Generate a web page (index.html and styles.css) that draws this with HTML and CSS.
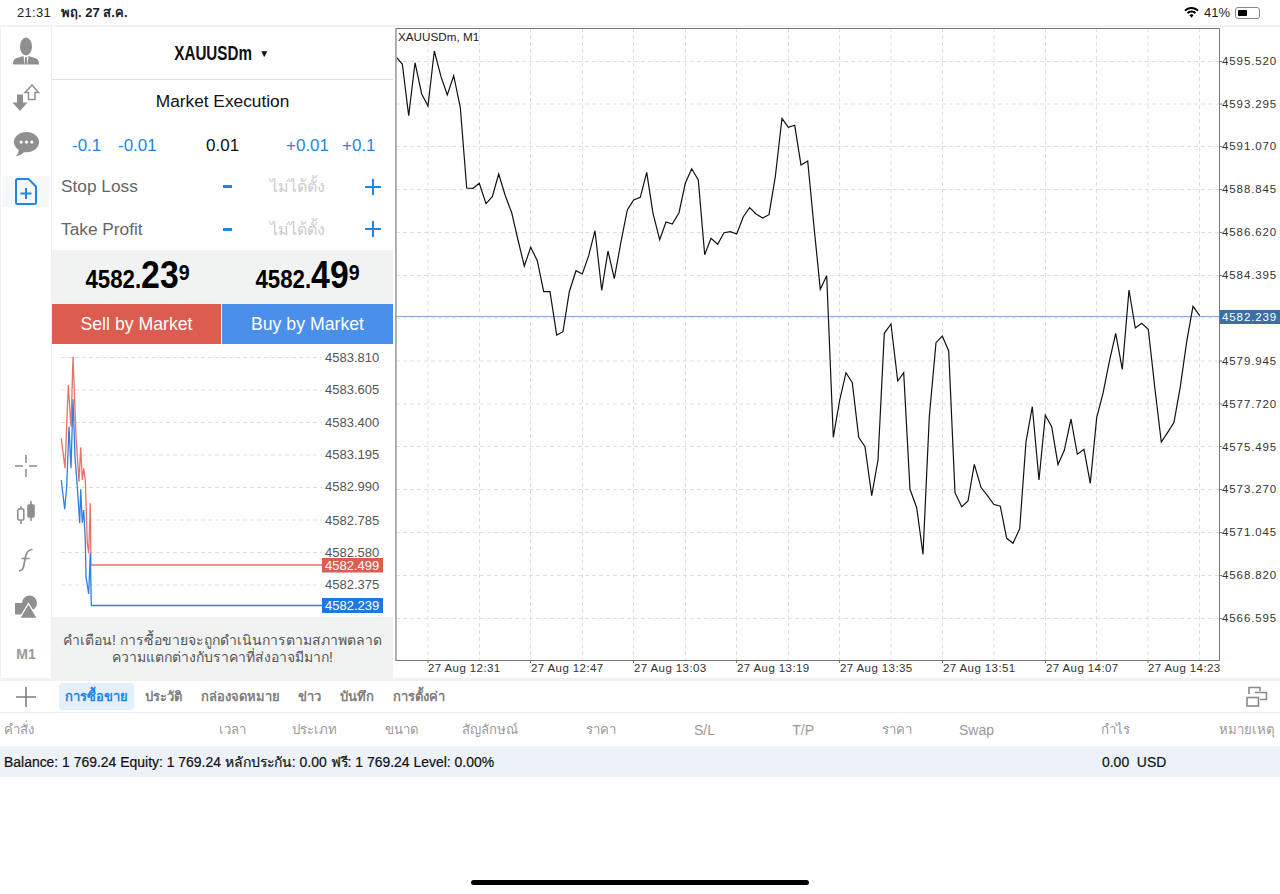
FILE: index.html
```html
<!DOCTYPE html>
<html lang="th">
<head>
    <meta charset="UTF-8">
    <meta name="viewport" content="width=device-width, initial-scale=1.0">
    <title>XAUUSDm - New Order</title>
    <link rel="stylesheet" href="styles.css">
</head>
<body>
    <!-- Status bar -->
    <header class="status">
        <span class="status-time">21:31</span>
        <span class="status-date">พฤ. 27 ส.ค.</span>
        <span class="status-right">
            <svg class="wifi" width="15" height="11" viewBox="0 0 15 11"><path d="M7.5 0C4.7 0 2.2 1.1.3 2.9l1.3 1.4C3.1 2.8 5.2 1.9 7.5 1.9s4.4.9 5.9 2.4l1.3-1.4C12.8 1.1 10.3 0 7.5 0z"/><path d="M7.5 3.6c-1.8 0-3.4.7-4.6 1.9l1.3 1.4c.9-.8 2-1.4 3.3-1.4s2.4.6 3.3 1.4l1.3-1.4C10.9 4.3 9.3 3.6 7.5 3.6z"/><path d="M7.5 7.2c-.9 0-1.6.3-2.2.9l2.2 2.6 2.2-2.6c-.6-.6-1.3-.9-2.2-.9z"/></svg>
            <span>41%</span>
            <span class="battery"><span class="battery-level"></span></span>
        </span>
    </header>

    <main class="workspace">
        <!-- Left tool column -->
        <nav class="sidebar">
            <div class="side-group">
                <div class="side-btn side-btn-person">
                    <svg width="28" height="28" viewBox="0 0 28 28" fill="#8f8f8f"><ellipse cx="14" cy="9.500" rx="6" ry="9"/><path d="M1 27.500c0-5 2-6 5.500-7l5 -1.500 1 8.500zM27 27.500c0-5-2-6-5.500-7l-5-1.500-1 8.500z"/><path d="M13.200 20h1.600l.7 7.500h-3z"/></svg>
                </div>
                <div class="side-btn">
                    <svg width="28" height="28" viewBox="0 0 28 28"><path d="M5 10.500h6v8h4.500L8 27 .5 18.500H5z" fill="#8f8f8f"/><path d="M20 1l6.500 7.500H23v7h-6.500v-7H13z" fill="#fff" stroke="#8f8f8f" stroke-width="1.500"/></svg>
                </div>
                <div class="side-btn">
                    <svg width="27" height="27" viewBox="0 0 28 28"><path d="M14 1C6.600 1 1 5.700 1 11.500c0 3.500 2 6.400 5 8.300-.2 2.200-1.300 4.700-3 6.200 3.200-.2 6.300-1.500 8.500-4 .8.100 1.600.1 2.500.1 7.400 0 13-4.800 13-10.600S21.400 1 14 1z" fill="#8f8f8f"/><circle cx="8.500" cy="11.500" r="1.700" fill="#fff"/><circle cx="14" cy="11.500" r="1.700" fill="#fff"/><circle cx="19.500" cy="11.500" r="1.700" fill="#fff"/></svg>
                </div>
                <div class="side-btn side-btn-active">
                    <svg width="22" height="27" viewBox="0 0 22 27" fill="none" stroke="#1f86e8" stroke-width="2"><path d="M2.500 1h11L21 8.500V24.500a1.500 1.500 0 0 1-1.500 1.500h-17A1.500 1.500 0 0 1 1 24.500V2.500A1.500 1.500 0 0 1 2.500 1z"/><path d="M11 10v11M5.500 15.500h11"/></svg>
                </div>
            </div>
            <div class="side-group">
                <div class="side-btn">
                    <svg width="24" height="24" viewBox="0 0 24 24" stroke="#a8a8a8" stroke-width="2"><path d="M1 12h8M15 12h8M12 1v8M12 15v8"/></svg>
                </div>
                <div class="side-btn">
                    <svg width="22" height="26" viewBox="0 0 22 26" fill="none" stroke="#8f8f8f" stroke-width="1.600"><path d="M6 6v3M6 20v4M16 1v4M16 17v4"/><rect x="2.800" y="9" width="6" height="11" rx="1"/><rect x="13" y="5" width="6" height="12" rx="1" fill="#8f8f8f"/></svg>
                </div>
                <div class="side-btn">
                    <svg width="16" height="24" viewBox="0 0 16 24" fill="none" stroke="#8f8f8f" stroke-width="1.700"><path d="M1 22.500c3.500.5 4.500-2 5.500-8.500s2-12 8-12.500M3.500 10.500h8"/></svg>
                </div>
                <div class="side-btn">
                    <svg width="24" height="24" viewBox="0 0 24 24" fill="#8f8f8f"><circle cx="15.500" cy="8" r="7.500"/><path d="M1 8h11v11.500H1z"/><path d="M14.500 8.500l9 15H5.500z" stroke="#fff" stroke-width="1.300"/></svg>
                </div>
                <div class="side-btn"><span class="side-m1">M1</span></div>
            </div>
        </nav>

        <!-- Order panel -->
        <section class="order">
            <div class="order-symbol"><span class="symbol-name">XAUUSDm</span><span class="symbol-arrow">▼</span></div>
            <div class="order-type">Market Execution</div>
            <div class="volume-row">
                <span class="vol vol-a">-0.1</span>
                <span class="vol vol-b">-0.01</span>
                <span class="vol-value">0.01</span>
                <span class="vol vol-c">+0.01</span>
                <span class="vol vol-d">+0.1</span>
            </div>
            <div class="level-row">
                <span class="level-name">Stop Loss</span>
                <span class="level-minus"></span>
                <span class="level-value">ไม่ได้ตั้ง</span>
                <span class="level-plus"></span>
            </div>
            <div class="level-row level-row-last">
                <span class="level-name">Take Profit</span>
                <span class="level-minus"></span>
                <span class="level-value">ไม่ได้ตั้ง</span>
                <span class="level-plus"></span>
            </div>
            <div class="prices">
                <div class="price"><span class="price-wrap">4582.<b>23</b><sup>9</sup></span></div>
                <div class="price"><span class="price-wrap">4582.<b>49</b><sup>9</sup></span></div>
            </div>
            <div class="trade-btns">
                <button class="btn-sell">Sell by Market</button>
                <button class="btn-buy">Buy by Market</button>
            </div>

            <!-- Tick chart -->
            <svg class="tick-chart" viewBox="52 344 341 273" width="341" height="273">
                <path class="grid" d="M61 357.500H322M61 390H322M61 422.500H322M61 455H322M61 487.500H322M61 520H322M61 552.500H322M61 585H322"/>
                <polyline class="tick-ask" points="61.300,438.300 65,468.300 68.300,385 71,426.700 73,356.700 76,436.700 79,481.700 80.700,447.300 82.300,480 83.700,468.300 85.300,480 87.300,543.300 88.700,553.300 90.300,503.300 91,565 322,565"/>
                <polyline class="tick-bid" points="61.300,480 64.700,509.300 66.700,486.700 69,426.700 71,468.300 73,399.300 75,456.700 77.300,486.700 79.700,523.300 80.700,489.300 82.300,522.700 83.700,510 85.300,540 86,576.700 88.700,594 90.300,553.300 91.300,605.500 322,605.500"/>
                <g class="tick-labels">
                    <text x="325" y="362">4583.810</text>
                    <text x="325" y="394">4583.605</text>
                    <text x="325" y="427">4583.400</text>
                    <text x="325" y="459">4583.195</text>
                    <text x="325" y="491">4582.990</text>
                    <text x="325" y="525">4582.785</text>
                    <text x="325" y="557">4582.580</text>
                    <text x="325" y="589">4582.375</text>
                </g>
                <rect x="322" y="558" width="61" height="14.500" fill="#dc5d50"/>
                <text class="tick-tag" x="325" y="570">4582.499</text>
                <rect x="322" y="598" width="61" height="15" fill="#1f78e0"/>
                <text class="tick-tag" x="325" y="610">4582.239</text>
            </svg>

            <div class="notice">คำเตือน! การซื้อขายจะถูกดำเนินการตามสภาพตลาด<br>ความแตกต่างกับราคาที่ส่งอาจมีมาก!</div>
        </section>

        <!-- Main chart, coordinates follow the page -->
        <svg class="main-chart" viewBox="395 26 885 652" width="885" height="652">
            <path class="grid" d="M396 61.500H1219M396 104H1219M396 146.500H1219M396 189.500H1219M396 232.500H1219M396 275.500H1219M396 318H1219M396 361H1219M396 404H1219M396 446.500H1219M396 489.500H1219M396 532.500H1219M396 575.500H1219M396 618.500H1219"/>
            <path class="grid" d="M428 28V660M479.500 28V660M530.500 28V660M582.500 28V660M633.500 28V660M685.500 28V660M736.500 28V660M788.500 28V660M839.500 28V660M891 28V660M942.500 28V660M994 28V660M1045.500 28V660M1096.500 28V660M1148 28V660M1199.500 28V660"/>
            <path class="price-line" d="M396 316.500H1219"/>
            <polyline class="series" points="396.700,57.700 402.300,64 408.700,115.700 415,62.700 421.700,94 428,106 434.300,51 441,76.700 447.300,95 453.700,75.700 460.300,107.300 466.700,188 473,188.300 479.300,183.300 486,203.700 492.300,196.700 498.700,174 505.300,195.700 511.700,212.700 518,240 524.300,266 530.700,247.300 537.300,260.700 543.700,291.700 550,291.700 556.700,335 563,331.700 569.300,291.700 576,270.700 582.300,274 588.700,255.700 595,230.700 601.700,290.300 608,251 614.300,278.700 620.700,243.300 627.300,210 633.700,200 640.300,197.300 646.700,172.300 653,213.300 659.700,239.700 666,222 672.300,224 679,212.700 685.300,183.300 691.700,168.700 698.300,180 704.700,254.700 711,238.300 717.700,244.300 724,232.700 730.300,231.700 736.700,234 743.300,216.700 749.700,207.700 756,214 762.700,218 769,214.700 775.300,176.700 782,118.300 788.300,127.300 794.700,125.300 801,165 807.700,161 814,226.700 820.300,289.300 826.700,275.700 833.300,437.300 839.700,400 846,372.700 852.300,382.700 858.700,437.300 865,446.700 871.700,495.700 878,460 884.300,333.300 891,324 897.700,381 903.700,372.700 910,489.300 916.700,507.700 923,554.300 929.300,416.700 936,342.700 942.300,336 948.700,351 955,492.700 961.700,506.700 968,501 974.300,464.300 981,487.300 987.300,495.300 993.700,504.300 1000.300,506.300 1006.700,538.300 1013,543.300 1019.700,528.700 1026,441.700 1032.300,406.700 1039,480 1045.300,415.300 1051.700,426.700 1058,464.700 1064.300,450.300 1071,419 1077.300,454.300 1084,449.300 1090.300,483.300 1096.700,417.700 1103,393.300 1109.300,361.700 1115.700,333.300 1122.300,369.300 1129,290 1135.300,328 1141.700,323.300 1148.300,329.300 1154.700,386.700 1161.300,442 1167.700,432.300 1174,422.300 1180.300,386.700 1186.700,341.700 1193,306.300 1199.700,315.700"/>
            <path class="frame" d="M396 660.500V28.500H1219.500V660.500H396"/>
            <path class="frame-left" d="M395.500 28V661"/>
            <path class="frame" d="M1219 61.500h3M1219 104h3M1219 146.500h3M1219 189.500h3M1219 232.500h3M1219 275.500h3M1219 361h3M1219 404h3M1219 446.500h3M1219 489.500h3M1219 532.500h3M1219 575.500h3M1219 618.500h3M428 660v3M530.500 660v3M633.500 660v3M736.500 660v3M839.500 660v3M942.500 660v3M1045.500 660v3M1148 660v3"/>
            <text class="chart-title" x="398" y="41">XAUUSDm, M1</text>
            <g class="axis-labels">
                <text x="1222" y="65">4595.520</text>
                <text x="1222" y="108">4593.295</text>
                <text x="1222" y="150">4591.070</text>
                <text x="1222" y="193">4588.845</text>
                <text x="1222" y="236">4586.620</text>
                <text x="1222" y="279">4584.395</text>
                <text x="1222" y="365">4579.945</text>
                <text x="1222" y="408">4577.720</text>
                <text x="1222" y="451">4575.495</text>
                <text x="1222" y="493">4573.270</text>
                <text x="1222" y="536">4571.045</text>
                <text x="1222" y="579">4568.820</text>
                <text x="1222" y="622">4566.595</text>
            </g>
            <rect x="1220" y="310" width="60" height="14" fill="#3b6ea5"/>
            <text class="axis-tag" x="1222" y="321">4582.239</text>
            <g class="time-labels">
                <text x="428" y="672">27 Aug 12:31</text>
                <text x="531" y="672">27 Aug 12:47</text>
                <text x="634" y="672">27 Aug 13:03</text>
                <text x="737" y="672">27 Aug 13:19</text>
                <text x="840" y="672">27 Aug 13:35</text>
                <text x="943" y="672">27 Aug 13:51</text>
                <text x="1046" y="672">27 Aug 14:07</text>
                <text x="1148" y="672">27 Aug 14:23</text>
            </g>
        </svg>
    </main>

    <!-- Bottom terminal -->
    <section class="terminal">
        <div class="tabs">
            <svg class="tabs-add" width="20" height="20" viewBox="0 0 20 20" stroke="#808080" stroke-width="1.600"><path d="M0 10h20M10 0v20"/></svg>
            <span class="tab tab-active">การซื้อขาย</span>
            <span class="tab">ประวัติ</span>
            <span class="tab">กล่องจดหมาย</span>
            <span class="tab">ข่าว</span>
            <span class="tab">บันทึก</span>
            <span class="tab">การตั้งค่า</span>
            <svg class="tabs-windows" width="22" height="21" viewBox="0 0 22 21" fill="none" stroke="#8a8a8a" stroke-width="1.600"><path d="M3 8V1.500h11V5"/><path d="M9 6.500h11.500v7H14"/><rect x="1" y="11.500" width="11.500" height="8.500"/></svg>
        </div>
        <div class="table-head">
            <span class="col-first">คำสั่ง</span>
            <span>เวลา</span>
            <span>ประเภท</span>
            <span>ขนาด</span>
            <span>สัญลักษณ์</span>
            <span>ราคา</span>
            <span class="col-latin">S/L</span>
            <span class="col-latin">T/P</span>
            <span>ราคา</span>
            <span class="col-latin">Swap</span>
            <span>กำไร</span>
            <span>หมายเหตุ</span>
        </div>
        <div class="balance">
            <span>Balance: 1 769.24 Equity: 1 769.24 หลักประกัน: 0.00 ฟรี: 1 769.24 Level: 0.00%</span>
            <span class="balance-total">0.00&nbsp; USD</span>
        </div>
    </section>

    <div class="home-bar"></div>
</body>
</html>
```
FILE: styles.css
```css
:root {
    --blue: #1f86e8;
    --grey-bg: #f1f3f3;
    --line: #e6e6e6;
    --muted: #9a9a9a;
}

* {
    box-sizing: border-box;
}

html, body {
    margin: 0;
    height: 100%;
}

body {
    position: relative;
    overflow: hidden;
    background: #fff;
    color: #111;
    font-family: "Liberation Sans", "Noto Sans", sans-serif;
}

/* Status bar */
.status {
    display: flex;
    align-items: center;
    height: 25px;
    padding: 0 20px 0 17px;
    font-size: 13px;
    color: #222;
}

.status-time {
    margin-right: 10px;
    letter-spacing: 0.3px;
}

.status-date {
    font-size: 13px;
    font-weight: bold;
}

.status-right {
    display: flex;
    align-items: center;
    gap: 5px;
    margin-left: auto;
    font-size: 13px;
}

.battery {
    position: relative;
    display: block;
    width: 25px;
    height: 12px;
    padding: 2px;
    border: 1px solid #888;
    border-radius: 3px;
}

.battery-level {
    display: block;
    width: 9px;
    height: 100%;
    background: #000;
    border-radius: 1px;
}

/* Workspace */
.workspace {
    display: flex;
    height: 653px;
    border-top: 2px solid #f3f3f3;
}

.sidebar {
    display: flex;
    flex-direction: column;
    justify-content: space-between;
    width: 52px;
    padding: 2px 0 9px;
    border-left: 1px solid #f1f1f1;
    border-right: 1px solid #eee;
}

.side-group {
    display: flex;
    flex-direction: column;
    gap: 16px;
}

.side-btn {
    display: flex;
    align-items: center;
    justify-content: center;
    width: 46px;
    height: 31px;
    margin-left: 2px;
}

.side-btn-person {
    margin-top: 6px;
    margin-bottom: 0;
}

.side-btn-active {
    background: #f6f8f8;
}

.side-m1 {
    font-size: 14px;
    font-weight: bold;
    color: #9a9a9a;
}

/* Order panel */
.order {
    display: flex;
    flex-direction: column;
    width: 341px;
    margin-right: 2px;
}

.order-symbol {
    display: flex;
    align-items: center;
    justify-content: center;
    gap: 1px;
    height: 53px;
    padding-right: 14px;
    border-bottom: 1px solid #ddd;
}

.symbol-name {
    display: inline-block;
    font-size: 20px;
    font-weight: bold;
    transform: scaleX(0.76);
}

.symbol-arrow {
    margin-left: -6px;
    font-size: 10px;
}

.order-type {
    display: flex;
    align-items: center;
    justify-content: center;
    height: 42px;
    font-size: 17.300px;
}

.volume-row {
    position: relative;
    height: 43px;
    font-size: 17px;
}

.vol, .vol-value {
    position: absolute;
    top: 14px;
}

.vol {
    color: var(--blue);
}

.vol-a { left: 20px; }
.vol-b { left: 66px; }
.vol-value { left: 154px; }
.vol-c { left: 234px; }
.vol-d { left: 290px; }

.level-row {
    display: flex;
    align-items: center;
    height: 43px;
    padding: 0 12px 0 9px;
    font-size: 17.300px;
}

.level-row-last {
    height: 42px;
}

.level-name {
    width: 163px;
    color: #666;
}

.level-minus {
    width: 9px;
    height: 3px;
    background: var(--blue);
}

.level-value {
    width: 55px;
    margin: 0 40px 0 38px;
    color: #ccc;
    font-size: 16px;
    white-space: nowrap;
}

.level-plus {
    width: 16px;
    height: 16px;
    background: linear-gradient(var(--blue), var(--blue)) center / 16px 2px no-repeat,
                linear-gradient(var(--blue), var(--blue)) center / 2px 16px no-repeat;
}

.prices {
    display: flex;
    height: 54px;
    background: var(--grey-bg);
}

.price {
    display: flex;
    align-items: center;
    justify-content: center;
    width: 50%;
    color: #000;
}

.price-wrap {
    display: inline-block;
    font-size: 25px;
    font-weight: bold;
    line-height: 40px;
    white-space: nowrap;
    transform: scaleX(0.89);
}

.price-wrap b {
    font-size: 38px;
}

.price-wrap sup {
    position: relative;
    top: 1px;
    font-size: 22px;
    line-height: 0;
}

.trade-btns {
    display: flex;
    height: 40px;
}

.trade-btns button {
    border: 0;
    padding: 0;
    color: #fff;
    font-family: inherit;
    font-size: 17.700px;
}

.btn-sell {
    width: 169px;
    margin-right: 1px;
    background: #dc5d50;
}

.btn-buy {
    flex: 1;
    background: #4a8fea;
}

.tick-chart {
    display: block;
    flex: none;
}

.grid {
    fill: none;
    stroke: #dfdfdf;
    stroke-width: 1;
    stroke-dasharray: 4 3;
}

.tick-ask, .tick-bid {
    fill: none;
    stroke-width: 1.300;
}

.tick-ask {
    stroke: #e57368;
}

.tick-bid {
    stroke: #2f80e0;
}

.tick-labels text {
    font-size: 13px;
    fill: #555;
}

.tick-tag {
    font-size: 13px;
    fill: #fff;
}

.notice {
    flex: 1;
    padding-top: 15px;
    background: var(--grey-bg);
    color: #555;
    font-size: 14px;
    line-height: 17px;
    text-align: center;
}

/* Main chart */
.main-chart {
    display: block;
    flex: none;
    margin-top: -1px;
}

.series {
    fill: none;
    stroke: #111;
    stroke-width: 1.200;
}

.price-line {
    fill: none;
    stroke: #8aa8cc;
    stroke-width: 1;
}

.frame {
    fill: none;
    stroke: #777;
    stroke-width: 1;
}

.frame-left {
    fill: none;
    stroke: #aaa;
    stroke-width: 1.500;
}

.chart-title {
    font-size: 11.700px;
    fill: #222;
}

.axis-labels text {
    font-size: 11.500px;
    letter-spacing: 0.9px;
    fill: #333;
}

.axis-tag {
    font-size: 11.500px;
    letter-spacing: 0.9px;
    fill: #fff;
}

.time-labels text {
    font-size: 11.500px;
    letter-spacing: 0.4px;
    fill: #333;
}

/* Terminal */
.terminal {
    border-top: 3px solid #f1f1f1;
}

.tabs {
    display: flex;
    align-items: center;
    height: 32px;
    padding-left: 16px;
    border-bottom: 1px solid #eee;
}

.tabs-add {
    margin-right: 24px;
}

.tab {
    margin-right: 18.700px;
    font-size: 13px;
    font-weight: bold;
    color: #808080;
    white-space: nowrap;
}

.tab-active {
    margin: 0 11px 0 -1px;
    padding: 3px 6px;
    background: #e3effa;
    border-radius: 4px;
    color: var(--blue);
}

.tabs-windows {
    margin-left: auto;
    margin-right: 12px;
}

.table-head {
    display: grid;
    grid-template-columns: 242px 91px 82px 99px 98px 99px 99px 98px 82px 136px 145px;
    align-items: center;
    height: 33px;
    padding: 0 5px 0 4px;
    color: var(--muted);
    font-size: 13.200px;
    text-align: right;
}

.table-head .col-first {
    grid-column: 1;
    grid-row: 1;
    text-align: left;
}

.table-head span:nth-child(2) {
    grid-column: 1;
    grid-row: 1;
}

.table-head .col-latin {
    font-size: 14px;
}

.balance {
    display: flex;
    align-items: center;
    height: 31px;
    padding: 0 0 0 4px;
    background: #edf2f9;
    font-size: 13.950px;
    color: #111;
    -webkit-text-stroke: 0.2px #111;
}

.balance-total {
    position: absolute;
    left: 1102px;
}

.home-bar {
    position: absolute;
    left: 471px;
    top: 880px;
    width: 338px;
    height: 5px;
    background: #000;
    border-radius: 3px;
}
```
